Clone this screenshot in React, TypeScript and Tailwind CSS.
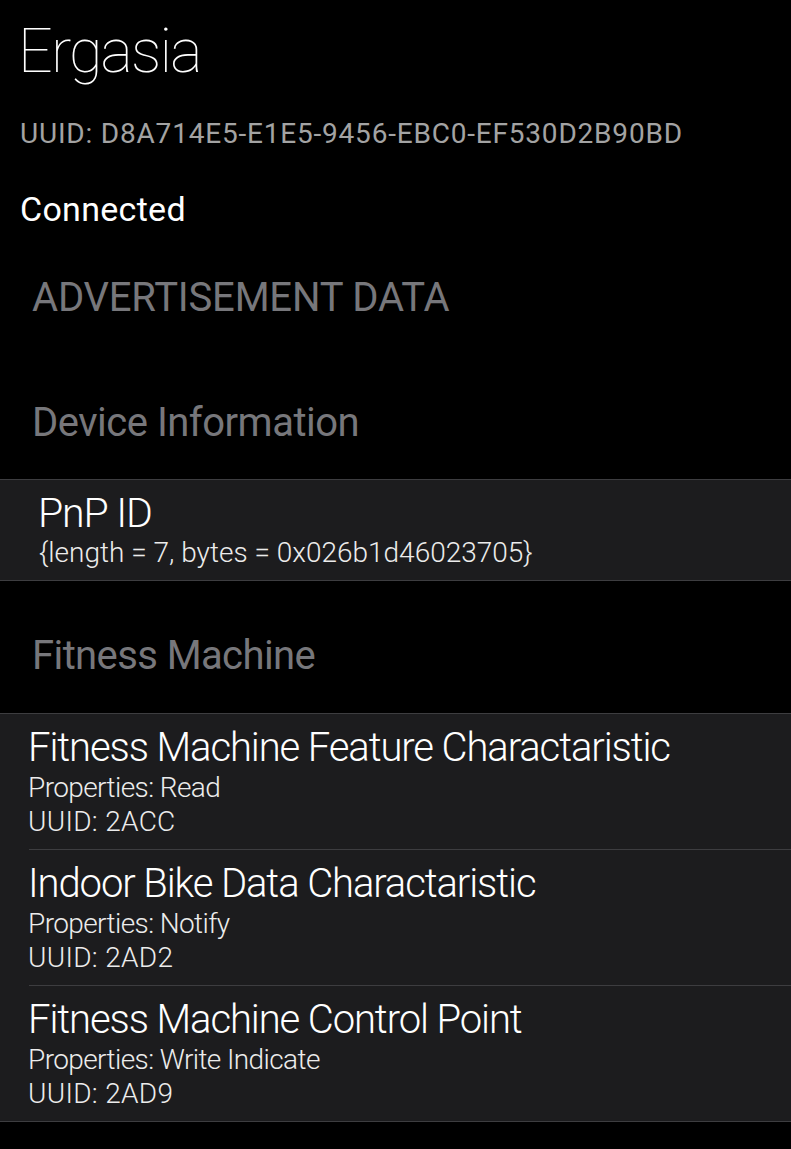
const font = { fontFamily: "Roboto, 'Liberation Sans', sans-serif" };

type Characteristic = { name: string; props: string; uuid: string };

const fitness: Characteristic[] = [
  { name: "Fitness Machine Feature Charactaristic", props: "Read", uuid: "2ACC" },
  { name: "Indoor Bike Data Charactaristic", props: "Notify", uuid: "2AD2" },
  { name: "Fitness Machine Control Point", props: "Write Indicate", uuid: "2AD9" },
];

const CharRow = ({ item, last }: { item: Characteristic; last: boolean }) => (
  <div className="pl-[29px]">
    <div className={`pt-[14px] pb-[13px] ${last ? "" : "border-b border-[#3d3d40]"}`}>
      <div className="-ml-[1px] text-[40px] leading-[40px] font-light tracking-[-1.1px] text-white whitespace-nowrap">
        {item.name}
      </div>
      <div className="-ml-[1px] mt-[6px] text-[28px] leading-[28px] font-light tracking-[-0.6px] text-[#ececec]">
        Properties: {item.props}
      </div>
      <div className="-ml-[1px] mt-[6px] text-[28px] leading-[28px] font-light tracking-[0.3px] text-[#ececec]">
        UUID: {item.uuid}
      </div>
    </div>
  </div>
);

export default function App() {
  return (
    <div className="w-[791px] min-h-[1149px] bg-black overflow-hidden" style={font}>
      <div className="px-[20px] pt-[21px]">
        <div className="-ml-[2px] text-[61px] leading-[61px] font-thin tracking-[-1.8px] text-white">Ergasia</div>
        <div className="mt-[38px] text-[28px] leading-[28px] tracking-[0.8px] text-[#a3a3a3] whitespace-nowrap">
          UUID: D8A714E5-E1E5-9456-EBC0-EF530D2B90BD
        </div>
        <div className="mt-[44px] text-[34px] leading-[34px] tracking-[0.3px] text-white">Connected</div>
      </div>

      <div className="px-[32px]">
        <div className="mt-[52px] text-[40px] leading-[40px] tracking-[-0.2px] text-[#77777b]">ADVERTISEMENT DATA</div>
        <div className="mt-[85px] text-[40px] leading-[40px] tracking-[-0.5px] text-[#77777b]">Device Information</div>
      </div>

      <div className="mt-[36px] bg-[#1c1c1e] border-y border-[#3d3d40] pl-[39px] pt-[13px] pb-[13px]">
        <div className="-ml-[1px] text-[41px] leading-[41px] font-light tracking-[-1.2px] text-white">PnP ID</div>
        <div className="mt-[5px] text-[28px] leading-[28px] font-light text-[#ececec]">
          {"{length = 7, bytes = 0x026b1d46023705}"}
        </div>
      </div>

      <div className="px-[32px] mt-[55px] text-[40px] leading-[40px] tracking-[-0.6px] text-[#77777b]">
        Fitness Machine
      </div>

      <div className="mt-[37px] bg-[#1c1c1e] border-y border-[#3d3d40]">
        {fitness.map((f, i) => (
          <CharRow key={f.uuid} item={f} last={i === fitness.length - 1} />
        ))}
      </div>
    </div>
  );
}
